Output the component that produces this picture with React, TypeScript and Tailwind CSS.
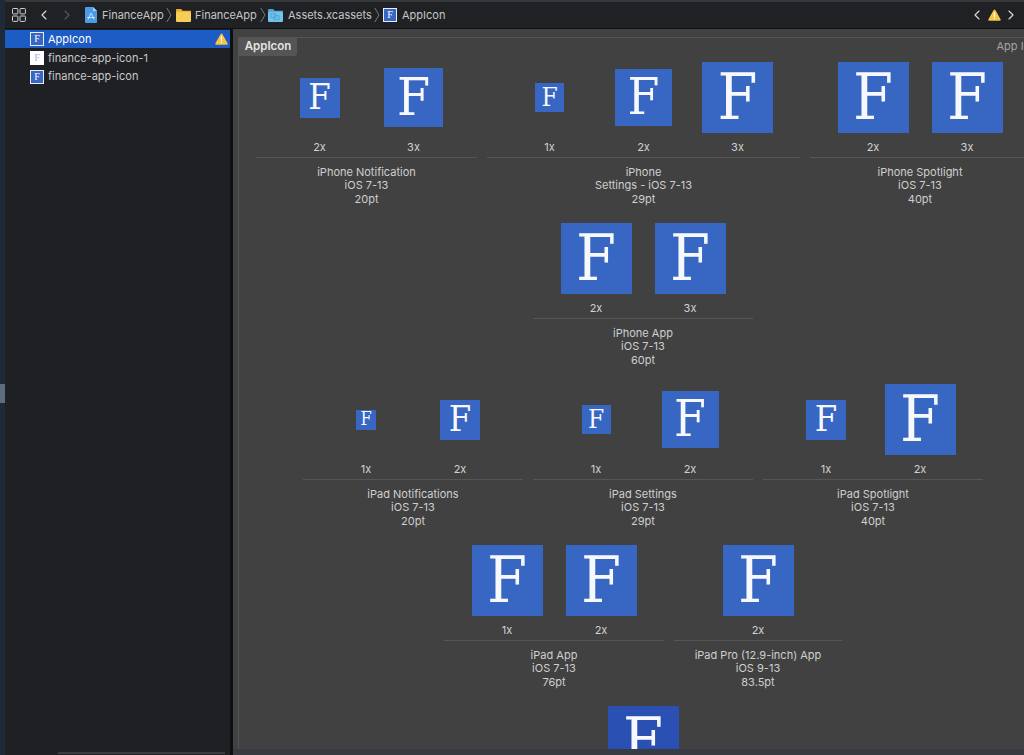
import { ChevronLeft, ChevronRight } from "lucide-react";

type IconSize = "s20" | "s29" | "s40" | "s57" | "s59" | "s71";

const iconSizes: Record<IconSize, string> = {
  s20: "w-[20px] h-[20px] text-[18px]",
  s29: "w-[29px] h-[29px] text-[26px]",
  s40: "w-[40px] h-[40px] text-[36px]",
  s57: "w-[57px] h-[57px] text-[51px]",
  s59: "w-[59px] h-[59px] text-[53px]",
  s71: "w-[71px] h-[71px] text-[64px]",
};

interface Slot {
  size: IconSize;
  scale: string;
}

interface IconGroup {
  width: string;
  slots: Slot[];
  lines: string[];
}

const rows: IconGroup[][] = [
  [
    {
      width: "w-[221px]",
      slots: [
        { size: "s40", scale: "2x" },
        { size: "s59", scale: "3x" },
      ],
      lines: ["iPhone Notification", "iOS 7-13", "20pt"],
    },
    {
      width: "w-[313px]",
      slots: [
        { size: "s29", scale: "1x" },
        { size: "s57", scale: "2x" },
        { size: "s71", scale: "3x" },
      ],
      lines: ["iPhone", "Settings - iOS 7-13", "29pt"],
    },
    {
      width: "w-[220px]",
      slots: [
        { size: "s71", scale: "2x" },
        { size: "s71", scale: "3x" },
      ],
      lines: ["iPhone Spotlight", "iOS 7-13", "40pt"],
    },
  ],
  [
    {
      width: "w-[220px]",
      slots: [
        { size: "s71", scale: "2x" },
        { size: "s71", scale: "3x" },
      ],
      lines: ["iPhone App", "iOS 7-13", "60pt"],
    },
  ],
  [
    {
      width: "w-[220px]",
      slots: [
        { size: "s20", scale: "1x" },
        { size: "s40", scale: "2x" },
      ],
      lines: ["iPad Notifications", "iOS 7-13", "20pt"],
    },
    {
      width: "w-[220px]",
      slots: [
        { size: "s29", scale: "1x" },
        { size: "s57", scale: "2x" },
      ],
      lines: ["iPad Settings", "iOS 7-13", "29pt"],
    },
    {
      width: "w-[220px]",
      slots: [
        { size: "s40", scale: "1x" },
        { size: "s71", scale: "2x" },
      ],
      lines: ["iPad Spotlight", "iOS 7-13", "40pt"],
    },
  ],
  [
    {
      width: "w-[220px]",
      slots: [
        { size: "s71", scale: "1x" },
        { size: "s71", scale: "2x" },
      ],
      lines: ["iPad App", "iOS 7-13", "76pt"],
    },
    {
      width: "w-[168px]",
      slots: [{ size: "s71", scale: "2x" }],
      lines: ["iPad Pro (12.9-inch) App", "iOS 9-13", "83.5pt"],
    },
  ],
];

const AppIconTile = ({ size, dark }: { size: IconSize; dark?: boolean }) => (
  <div
    className={`flex items-center justify-center pb-[2px] text-[#f6f8fc] leading-none [font-family:'DejaVu_Serif_Condensed','DejaVu_Serif',serif] ${iconSizes[size]} ${
      dark ? "bg-[#2b50b4]" : "bg-[#3766c3]"
    }`}
  >
    F
  </div>
);

const Group = ({ group }: { group: IconGroup }) => (
  <div className={`flex flex-col shrink-0 ${group.width}`}>
    <div className="flex justify-center">
      {group.slots.map((slot, i) => (
        <div key={i} className="w-[94px] flex flex-col items-center">
          <div className="h-[71px] flex items-center">
            <AppIconTile size={slot.size} />
          </div>
          <div className="h-[24px] pt-[4px] flex items-center text-[11px] text-[#d2d2d2]">{slot.scale}</div>
        </div>
      ))}
    </div>
    <div className="h-px bg-[#565656]" />
    <div className="pt-[7.5px] text-center text-[11px] leading-[13.5px] text-[#cfcfcf]">
      {group.lines.map((line) => (
        <div key={line}>{line}</div>
      ))}
    </div>
  </div>
);

const Thumb = ({ plain }: { plain?: boolean }) => (
  <div
    className={`w-[14px] h-[14px] shrink-0 flex items-center justify-center border-[1.5px] text-[10px] leading-none [font-family:'Liberation_Serif',serif] ${
      plain
        ? "border-white bg-white text-[#9db4e6]"
        : "border-[#e8ecf5] bg-[#3766c3] text-white"
    }`}
  >
    F
  </div>
);

const Warning = () => (
  <svg width="13" height="12" viewBox="0 0 14 13" className="shrink-0">
    <path d="M7 .6c.4 0 .7.2.9.6l5.7 10c.4.7-.1 1.500-.9 1.500H1.300c-.8 0-1.300-.8-.9-1.500l5.700-10c.2-.4.5-.6.9-.6z" fill="#f6c445" />
    <rect x="6.300" y="3.600" width="1.400" height="5" rx=".6" fill="#fff" />
    <circle cx="7" cy="10.200" r=".85" fill="#fff" />
  </svg>
);

const Separator = () => (
  <svg width="6" height="16" viewBox="0 0 6 16" className="shrink-0" fill="none" stroke="#77797c" strokeWidth="1">
    <path d="M.8 1 5 8 .8 15" />
  </svg>
);

const GridIcon = () => (
  <svg width="14" height="14" viewBox="0 0 14 14" fill="none" stroke="#d2d2d2" strokeWidth="1" className="shrink-0">
    <rect x=".5" y=".5" width="5.400" height="5.400" rx=".8" />
    <rect x="8" y=".5" width="5.400" height="5.400" rx=".8" />
    <rect x=".5" y="8" width="5.400" height="5.400" rx=".8" />
    <rect x="8" y="8" width="5.400" height="5.400" rx=".8" />
  </svg>
);

const FileIcon = () => (
  <svg width="12" height="16" viewBox="0 0 12 16" className="shrink-0">
    <path d="M1 0h7l4 4v11a1 1 0 0 1-1 1H1a1 1 0 0 1-1-1V1a1 1 0 0 1 1-1z" fill="#4d9be6" />
    <path d="M8 0l4 4H8z" fill="#a9d1f5" />
    <path d="M3 12.500 6 6l3 6.500M2.200 10.500h7.600" fill="none" stroke="#cfe5fa" strokeWidth=".9" />
  </svg>
);

const YellowFolder = () => (
  <svg width="15" height="13" viewBox="0 0 15 13" className="shrink-0">
    <path d="M0 1.200C0 .5.5 0 1.200 0h3.600c.4 0 .7.2.9.5L6.600 1.700H15V3H0z" fill="#e3ac36" />
    <rect y="2.800" width="15" height="10.200" rx="1" fill="#f7cd55" />
  </svg>
);

const AssetFolder = () => (
  <svg width="15" height="13" viewBox="0 0 15 13" className="shrink-0">
    <path d="M0 1.200C0 .5.5 0 1.200 0h3.600c.4 0 .7.2.9.5L6.600 1.700H15V3H0z" fill="#4fa3cf" />
    <rect y="2.800" width="15" height="10.200" rx="1" fill="#71c4ea" />
    <rect x="3" y="4.800" width="5" height="4" fill="none" stroke="#4fa3cf" strokeWidth=".9" />
    <rect x="6" y="6.800" width="5" height="4" fill="none" stroke="#4fa3cf" strokeWidth=".9" />
  </svg>
);

const Toolbar = () => (
  <div className="h-[29px] shrink-0 flex items-center border-t-2 border-b border-t-[#37383a] border-b-[#111214] bg-[#202124] text-[11px] text-[#c6c6c6]">
    <div className="ml-[7px]">
      <GridIcon />
    </div>
    <ChevronLeft className="ml-[10px] w-[16px] h-[16px] text-[#d8d8d8]" strokeWidth={1.75} />
    <ChevronRight className="ml-[7px] w-[16px] h-[16px] text-[#55575a]" strokeWidth={1.75} />
    <div className="ml-[10px]">
      <FileIcon />
    </div>
    <span className="ml-[5px] w-[60px]">FinanceApp</span>
    <div className="ml-[4px]">
      <Separator />
    </div>
    <div className="ml-[4px]">
      <YellowFolder />
    </div>
    <span className="ml-[4px] w-[61px]">FinanceApp</span>
    <div className="ml-[4px]">
      <Separator />
    </div>
    <div className="ml-[2px]">
      <AssetFolder />
    </div>
    <span className="ml-[5px] w-[82px]">Assets.xcassets</span>
    <div className="ml-[4px]">
      <Separator />
    </div>
    <div className="ml-[3px]">
      <Thumb />
    </div>
    <span className="ml-[5px]">AppIcon</span>
    <div className="ml-auto flex items-center mr-[5px]">
      <ChevronLeft className="w-[16px] h-[16px] text-[#d8d8d8]" strokeWidth={1.75} />
      <div className="ml-[3px]">
        <Warning />
      </div>
      <ChevronRight className="ml-[2px] w-[16px] h-[16px] text-[#d8d8d8]" strokeWidth={1.75} />
    </div>
  </div>
);

const Sidebar = () => (
  <div className="w-[225px] shrink-0 flex flex-col bg-[#1e2023] text-[11px] text-[#c8c8c8]">
    <div className="h-[1px]" />
    <div className="h-[18px] flex items-center pl-[25px] pr-[2px] bg-[#1d5bc5] text-white">
      <Thumb />
      <span className="ml-[4px]">AppIcon</span>
      <div className="ml-auto">
        <Warning />
      </div>
    </div>
    <div className="h-[20px] flex items-center pl-[25px]">
      <Thumb plain />
      <span className="ml-[4px]">finance-app-icon-1</span>
    </div>
    <div className="h-[17px] flex items-center pl-[25px]">
      <Thumb />
      <span className="ml-[4px]">finance-app-icon</span>
    </div>
    <div className="mt-auto mb-px ml-[53px] w-[167px] h-[2px] bg-[#3a3c40]" />
  </div>
);

export default function App() {
  return (
    <div className="w-[1024px] h-[755px] overflow-hidden flex bg-[#1e2023] [font-family:Inter,sans-serif]">
      <div className="w-[5px] shrink-0 flex flex-col bg-[#1e2a38]">
        <div className="h-[384px] shrink-0" />
        <div className="h-[19px] shrink-0 bg-[#5e6c7e]" />
      </div>
      <div className="w-[1019px] shrink-0 flex flex-col">
        <Toolbar />
        <div className="flex-1 min-h-0 flex">
          <Sidebar />
          <div className="w-[3px] shrink-0 bg-[#0e0f10]" />
          <div className="w-[791px] shrink-0 flex flex-col bg-[#414141] overflow-hidden">
            <div className="flex-1 min-h-0 pl-[5px] pt-[8px] overflow-hidden">
              <div className="w-[809px] h-[800px] border-l border-t border-[#545454]">
                <div className="flex items-start justify-between">
                  <div className="h-[18px] w-[58px] pb-[1px] flex items-center justify-center rounded-br-[3px] bg-[#555555] text-[11.5px] font-semibold text-[#e4e4e4]">
                    AppIcon
                  </div>
                  <span className="mr-[4px] text-[11px] text-[#a4a4a4]">App Icon</span>
                </div>
                <div className="pt-[6px] flex flex-col gap-[17px]">
                  {rows.map((row, i) => (
                    <div key={i} className="flex justify-center gap-[10px]">
                      {row.map((group) => (
                        <Group key={group.lines[0]} group={group} />
                      ))}
                    </div>
                  ))}
                  <div className="flex justify-center">
                    <AppIconTile size="s71" dark />
                  </div>
                </div>
              </div>
            </div>
            <div className="h-[6px] shrink-0 bg-[#383b41]" />
          </div>
        </div>
      </div>
    </div>
  );
}
